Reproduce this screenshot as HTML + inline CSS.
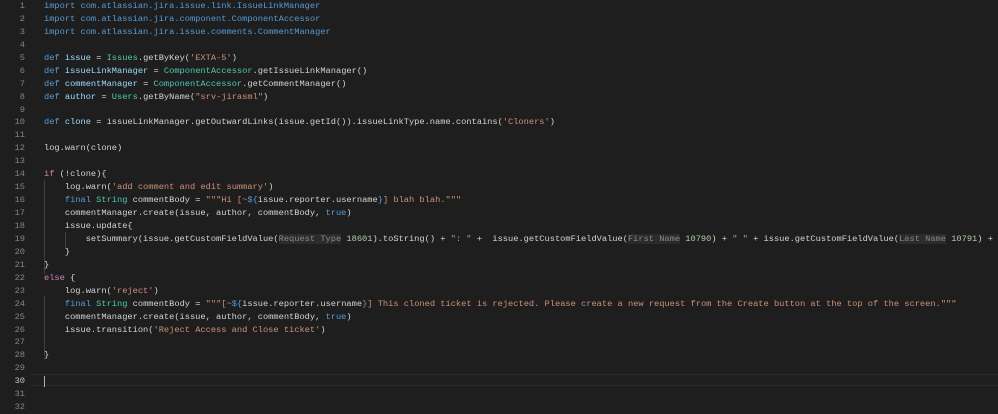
<!DOCTYPE html>
<html><head><meta charset="utf-8"><style>
body{margin:0;width:998px;height:414px;background:#1e1e1e;overflow:hidden;font-family:"Liberation Mono",monospace;font-size:8.7px;color:#d4d4d4}
.l{position:absolute;left:0;height:12.94px;line-height:12.94px;white-space:pre;width:998px}
.n{position:absolute;left:0;width:25px;text-align:right;color:#858585}
.c{position:absolute;left:44px}
.k{color:#569cd6}.p{color:#c586c0}.t{color:#4ec9b0}.s{color:#ce9178}.f{color:#dcdcaa}.v{color:#9cdcfe}.m{color:#b5cea8}
.h{color:#8a8a8a;background:#2b2b2b}
.cur{box-sizing:border-box;border-top:1px solid #2a2a2a;border-bottom:1px solid #2a2a2a}
.g{position:absolute;width:1px;background:#404040}
</style></head><body>
<div class="g" style="left:44px;top:180px;height:94px"></div>
<div class="g" style="left:65px;top:232px;height:16px"></div>
<div class="g" style="left:44px;top:296px;height:60px"></div>
<div class="l" style="top:0px"><span class="n">1</span><span class="c"><span class="k">import com.atlassian.jira.issue.link.IssueLinkManager</span></span></div>
<div class="l" style="top:12.94px"><span class="n">2</span><span class="c"><span class="k">import com.atlassian.jira.component.ComponentAccessor</span></span></div>
<div class="l" style="top:25.88px"><span class="n">3</span><span class="c"><span class="k">import com.atlassian.jira.issue.comments.CommentManager</span></span></div>
<div class="l" style="top:38.82px"><span class="n">4</span></div>
<div class="l" style="top:51.76px"><span class="n">5</span><span class="c"><span class="k">def</span> <span class="v">issue</span> = <span class="t">Issues</span>.getByKey(<span class="s">'EXTA-5'</span>)</span></div>
<div class="l" style="top:64.7px"><span class="n">6</span><span class="c"><span class="k">def</span> <span class="v">issueLinkManager</span> = <span class="t">ComponentAccessor</span>.getIssueLinkManager()</span></div>
<div class="l" style="top:77.64px"><span class="n">7</span><span class="c"><span class="k">def</span> <span class="v">commentManager</span> = <span class="t">ComponentAccessor</span>.getCommentManager()</span></div>
<div class="l" style="top:90.58px"><span class="n">8</span><span class="c"><span class="k">def</span> <span class="v">author</span> = <span class="t">Users</span>.getByName(<span class="s">"srv-jirasml"</span>)</span></div>
<div class="l" style="top:103.52px"><span class="n">9</span></div>
<div class="l" style="top:116.46px"><span class="n">10</span><span class="c"><span class="k">def</span> <span class="v">clone</span> = issueLinkManager.getOutwardLinks(issue.getId()).issueLinkType.name.contains(<span class="s">'Cloners'</span>)</span></div>
<div class="l" style="top:129.4px"><span class="n">11</span></div>
<div class="l" style="top:142.34px"><span class="n">12</span><span class="c">log.warn(clone)</span></div>
<div class="l" style="top:155.28px"><span class="n">13</span></div>
<div class="l" style="top:168.22px"><span class="n">14</span><span class="c"><span class="p">if</span> (!clone){</span></div>
<div class="l" style="top:181.16px"><span class="n">15</span><span class="c">    log.warn(<span class="s">'add comment and edit summary'</span>)</span></div>
<div class="l" style="top:194.1px"><span class="n">16</span><span class="c">    <span class="k">final</span> <span class="t">String</span> commentBody = <span class="s">"""Hi [~</span><span class="k">${</span>issue.reporter.username<span class="k">}</span><span class="s">] blah blah."""</span></span></div>
<div class="l" style="top:207.04px"><span class="n">17</span><span class="c">    commentManager.create(issue, author, commentBody, <span class="k">true</span>)</span></div>
<div class="l" style="top:219.98px"><span class="n">18</span><span class="c">    issue.update{</span></div>
<div class="l" style="top:232.92px"><span class="n">19</span><span class="c">        setSummary(issue.getCustomFieldValue(<span class="h">Request Type</span> <span class="m">18601</span>).toString() + <span class="s">": "</span> +  issue.getCustomFieldValue(<span class="h">First Name</span> <span class="m">10790</span>) + <span class="s">" "</span> + issue.getCustomFieldValue(<span class="h">Last Name</span> <span class="m">10791</span>) + <span class="s">"</span></span></div>
<div class="l" style="top:245.86px"><span class="n">20</span><span class="c">    }</span></div>
<div class="l" style="top:258.8px"><span class="n">21</span><span class="c">}</span></div>
<div class="l" style="top:271.74px"><span class="n">22</span><span class="c"><span class="p">else</span> {</span></div>
<div class="l" style="top:284.68px"><span class="n">23</span><span class="c">    log.warn(<span class="s">'reject'</span>)</span></div>
<div class="l" style="top:297.62px"><span class="n">24</span><span class="c">    <span class="k">final</span> <span class="t">String</span> commentBody = <span class="s">"""[~</span><span class="k">${</span>issue.reporter.username<span class="k">}</span><span class="s">] This cloned ticket is rejected. Please create a new request from the Create button at the top of the screen."""</span></span></div>
<div class="l" style="top:310.56px"><span class="n">25</span><span class="c">    commentManager.create(issue, author, commentBody, <span class="k">true</span>)</span></div>
<div class="l" style="top:323.5px"><span class="n">26</span><span class="c">    issue.transition(<span class="s">'Reject Access and Close ticket'</span>)</span></div>
<div class="l" style="top:336.44px"><span class="n">27</span></div>
<div class="l" style="top:349.38px"><span class="n">28</span><span class="c">}</span></div>
<div class="l" style="top:362.32px"><span class="n">29</span></div>
<div class="l cur" style="top:373.5px;left:30px;width:968px"></div>
<div class="l" style="top:375.26px"><span class="n" style="color:#c6c6c6">30</span><span class="c" style="top:1px;width:1px;height:11px;background:#aeafad"></span></div>
<div class="l" style="top:388.2px"><span class="n">31</span></div>
<div class="l" style="top:401.14px"><span class="n">32</span></div>
</body></html>
